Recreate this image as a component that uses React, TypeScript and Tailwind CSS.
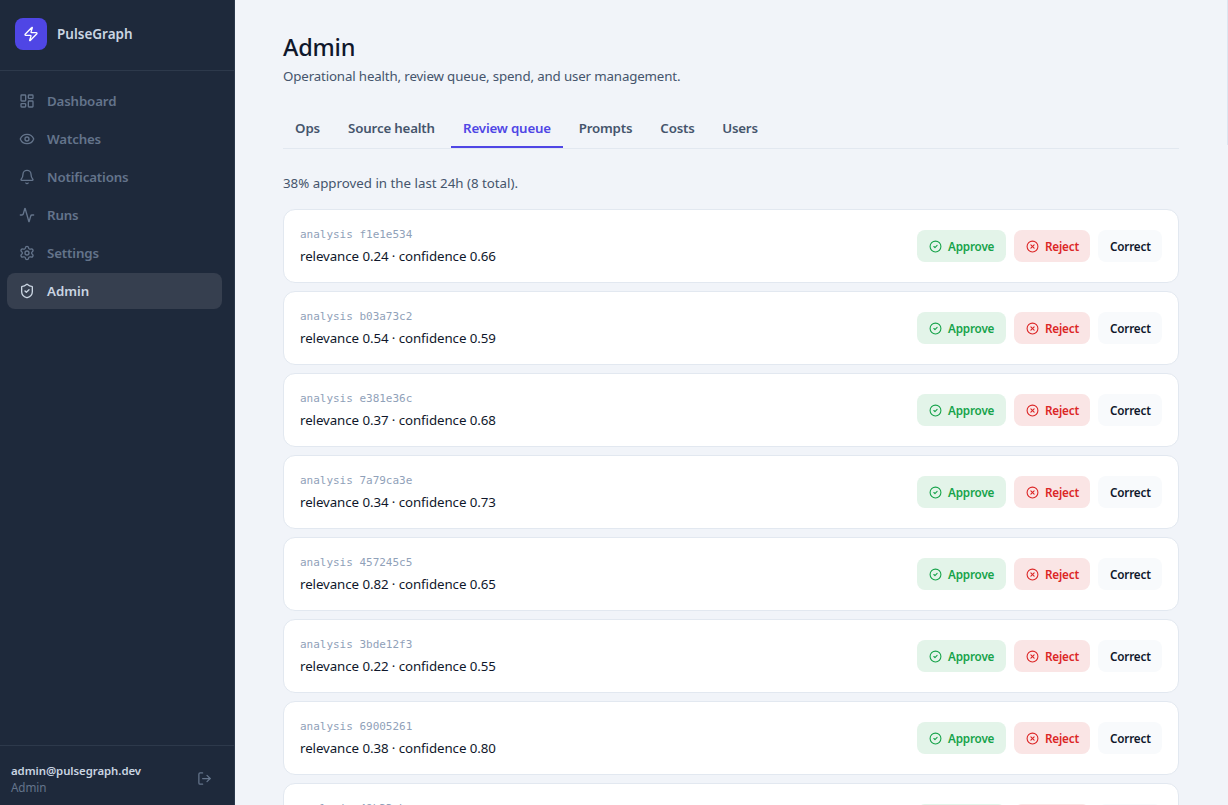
import React from "react";
import { Zap, LayoutDashboard, Eye, Bell, Activity, Settings, ShieldCheck, LogOut, CircleCheck, CircleX } from "lucide-react";

const nav = [
  { label: "Dashboard", Icon: LayoutDashboard },
  { label: "Watches", Icon: Eye },
  { label: "Notifications", Icon: Bell },
  { label: "Runs", Icon: Activity },
  { label: "Settings", Icon: Settings },
  { label: "Admin", Icon: ShieldCheck, active: true },
];

const tabs = [
  { label: "Ops", width: "w-[49px]" },
  { label: "Source health", width: "w-[111px]" },
  { label: "Review queue", width: "w-[112px]", active: true },
  { label: "Prompts", width: "w-[77px]" },
  { label: "Costs", width: "w-[59px]" },
  { label: "Users", width: "w-[58px]" },
];

const items = [
  { id: "f1e1e534", relevance: "0.24", confidence: "0.66" },
  { id: "b03a73c2", relevance: "0.54", confidence: "0.59" },
  { id: "e381e36c", relevance: "0.37", confidence: "0.68" },
  { id: "7a79ca3e", relevance: "0.34", confidence: "0.73" },
  { id: "457245c5", relevance: "0.82", confidence: "0.65" },
  { id: "3bde12f3", relevance: "0.22", confidence: "0.55" },
  { id: "69005261", relevance: "0.38", confidence: "0.80" },
  { id: "49b33ebc", relevance: "0.41", confidence: "0.62" },
];

function Sidebar() {
  return (
    <aside className="flex w-[235px] shrink-0 flex-col border-r border-[#2b384b] bg-[#1e293b]">
      <div className="flex h-[71px] items-center gap-[10px] border-b border-[#2d394b] px-[15px] pb-[3px]">
        <div className="flex size-8 items-center justify-center rounded-lg bg-[#4f46e5] text-white">
          <Zap size={16} />
        </div>
        <span className="pt-[2px] text-[13.5px] font-semibold text-slate-300">PulseGraph</span>
      </div>
      <nav className="flex flex-1 flex-col gap-[2px] py-3 pr-3 pl-[7px]">
        {nav.map(({ label, Icon, active }) => (
          <a
            key={label}
            className={
              active
                ? "flex h-9 items-center gap-3 rounded-lg bg-[#363f4f] px-3 text-[13.3px] font-semibold text-slate-300"
                : "flex h-9 items-center gap-3 rounded-lg px-3 text-[13.3px] font-semibold tracking-[-0.15px] text-[#64748b]"
            }
          >
            <Icon size={16} />
            <span className="pt-px">{label}</span>
          </a>
        ))}
      </nav>
      <div className="flex h-[60px] items-center justify-between border-t border-[#2d394b] pt-[6px] pr-[22px] pl-[11px]">
        <div className="pt-px">
          <div className="text-[11.4px] leading-4 font-semibold tracking-[-0.06px] text-slate-300">admin@pulsegraph.dev</div>
          <div className="text-[11.7px] leading-4 tracking-[-0.1px] text-[#64748b]">Admin</div>
        </div>
        <LogOut size={15} className="text-[#64748b]" />
      </div>
    </aside>
  );
}

function ReviewCard({ id, relevance, confidence }: { id: string; relevance: string; confidence: string }) {
  return (
    <div className="flex h-[74px] shrink-0 items-center justify-between rounded-xl border border-slate-200 bg-white px-4">
      <div>
        <div className="font-[DejaVu_Sans_Mono,monospace] text-[11px] leading-[16px] tracking-[-0.02px] text-slate-400">
          analysis {id}
        </div>
        <div className="mt-[3px] text-[13.3px] leading-5 tracking-[-0.08px] text-slate-900">
          relevance {relevance} · confidence {confidence}
        </div>
      </div>
      <div className="flex gap-2 text-[11.7px] font-semibold tracking-[-0.18px]">
        <button className="flex h-8 w-[89px] items-center gap-[6px] rounded-lg bg-[#e3f4e9] pl-3 text-[#16a34a]">
          <CircleCheck size={13} />
          <span className="pt-px">Approve</span>
        </button>
        <button className="flex h-8 w-[76px] items-center gap-[6px] rounded-lg bg-[#fae5e5] pl-3 text-[#dc2626]">
          <CircleX size={13} />
          <span className="pt-px">Reject</span>
        </button>
        <button className="flex h-8 w-16 items-center rounded-lg bg-slate-50 pl-3 text-slate-900">
          <span className="pt-px">Correct</span>
        </button>
      </div>
    </div>
  );
}

export default function App() {
  return (
    <div className="relative flex h-[805px] w-[1228px] overflow-hidden bg-[#f1f4f9] font-['Noto_Sans','Open_Sans',sans-serif]">
      <Sidebar />
      <main className="flex flex-1 flex-col overflow-hidden pt-[31px] pr-[49px] pl-12">
        <h1 className="text-[23.5px] leading-8 font-medium tracking-[-0.2px] text-slate-900">Admin</h1>
        <p className="mt-[3px] text-[13.3px] leading-5 tracking-[-0.145px] text-slate-600">
          Operational health, review queue, spend, and user management.
        </p>
        <div className="mt-6 flex h-[39px] shrink-0 gap-1 border-b border-slate-200">
          {tabs.map(({ label, width, active }) => (
            <button
              key={label}
              className={`${width} border-b-2 pt-[2px] text-center text-[13.3px] font-semibold tracking-[-0.18px] whitespace-nowrap ${
                active ? "border-[#4f46e5] text-[#4f46e5]" : "border-transparent text-slate-600"
              }`}
            >
              {label}
            </button>
          ))}
        </div>
        <p className="mt-6 text-[13.3px] leading-5 text-slate-600">38% approved in the last 24h (8 total).</p>
        <div className="mt-4 flex flex-col gap-2">
          {items.map((item) => (
            <ReviewCard key={item.id} {...item} />
          ))}
        </div>
      </main>
      <div className="absolute top-0 right-0 h-[145px] w-px bg-[#dce5f0]" />
    </div>
  );
}
